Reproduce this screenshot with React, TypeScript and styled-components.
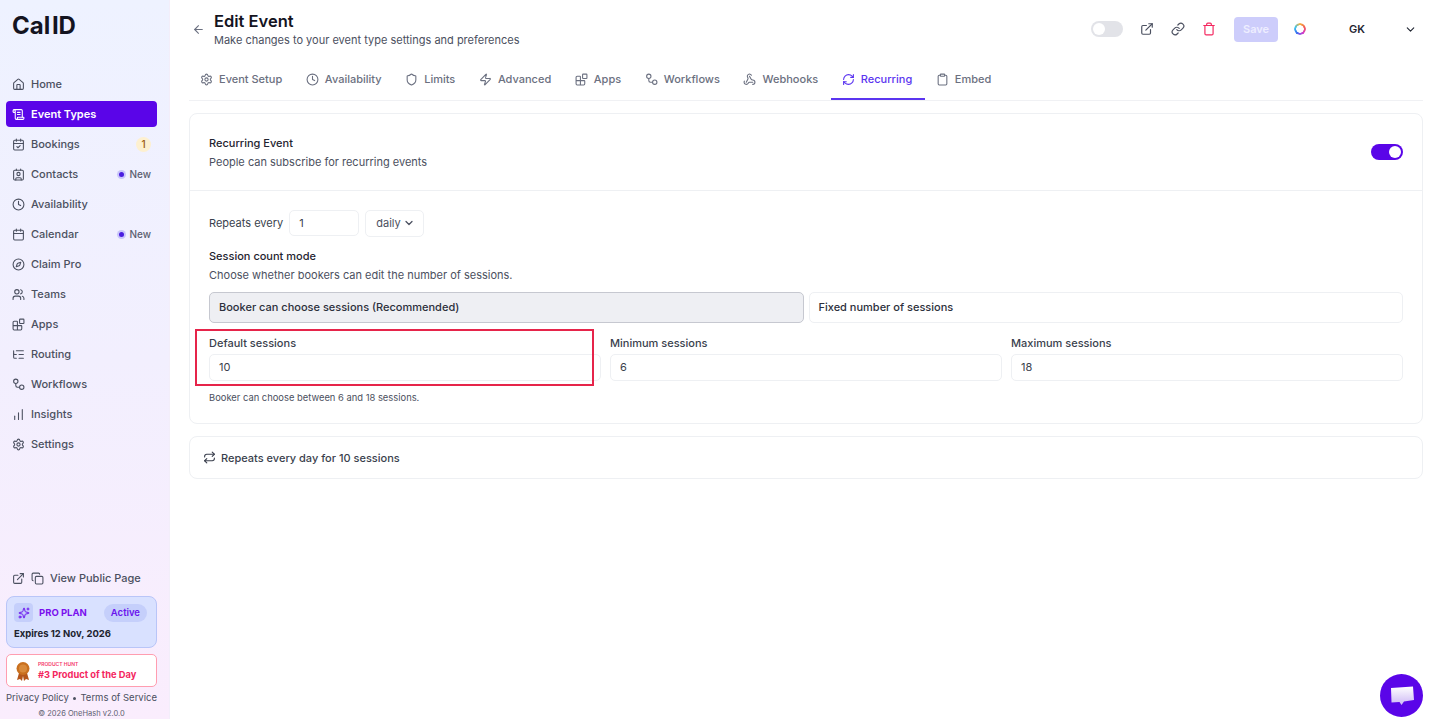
import React from "react";
import styled, { createGlobalStyle } from "styled-components";
import {
  ArrowLeft,
  Blocks,
  Calendar,
  CalendarCheck,
  ChartNoAxesColumnIncreasing,
  ChevronDown,
  Clipboard,
  Clock,
  Compass,
  Contact,
  Copy,
  ExternalLink,
  House,
  Link,
  ListTree,
  RefreshCw,
  Repeat,
  ScrollText,
  Settings,
  Shield,
  Sparkles,
  Trash,
  Users,
  Webhook,
  Zap,
} from "lucide-react";

const GlobalStyle = createGlobalStyle`
  * { box-sizing: border-box; }
  html, body { margin: 0; height: 100%; overflow: hidden; background: #fff; }
  body { font-family: Inter, "Liberation Sans", sans-serif; color: #1f2430; }
`;

const WorkflowIcon = ({ size = 13 }: { size?: number }) => (
  <svg width={size} height={size} viewBox="0 0 24 24" fill="none" stroke="currentColor" strokeWidth="2">
    <circle cx="7" cy="6" r="4" />
    <circle cx="18" cy="17" r="4" />
    <path d="M7 10v4a3 3 0 0 0 3 3h4" />
  </svg>
);

const navItems = [
  { label: "Home", icon: <House size={13} /> },
  { label: "Event Types", icon: <ScrollText size={13} />, active: true },
  { label: "Bookings", icon: <CalendarCheck size={13} />, count: "1" },
  { label: "Contacts", icon: <Contact size={13} />, isNew: true },
  { label: "Availability", icon: <Clock size={13} /> },
  { label: "Calendar", icon: <Calendar size={13} />, isNew: true },
  { label: "Claim Pro", icon: <Compass size={13} /> },
  { label: "Teams", icon: <Users size={13} /> },
  { label: "Apps", icon: <Blocks size={13} /> },
  { label: "Routing", icon: <ListTree size={13} /> },
  { label: "Workflows", icon: <WorkflowIcon /> },
  { label: "Insights", icon: <ChartNoAxesColumnIncreasing size={13} /> },
  { label: "Settings", icon: <Settings size={13} /> },
];

const tabs = [
  { label: "Event Setup", icon: <Settings size={13} /> },
  { label: "Availability", icon: <Clock size={13} /> },
  { label: "Limits", icon: <Shield size={13} /> },
  { label: "Advanced", icon: <Zap size={13} /> },
  { label: "Apps", icon: <Blocks size={13} /> },
  { label: "Workflows", icon: <WorkflowIcon /> },
  { label: "Webhooks", icon: <Webhook size={13} /> },
  { label: "Recurring", icon: <RefreshCw size={13} />, active: true },
  { label: "Embed", icon: <Clipboard size={13} /> },
];

const App: React.FC = () => {
  return (
    <Page>
      <GlobalStyle />
      <Sidebar>
        <Logo>Cal ID</Logo>
        <Nav>
          {navItems.map((item) => (
            <NavItem key={item.label} $active={item.active}>
              {item.icon}
              <span>{item.label}</span>
              {item.count && <CountBadge>{item.count}</CountBadge>}
              {item.isNew && (
                <NewBadge>
                  <NewDot />
                  New
                </NewBadge>
              )}
            </NavItem>
          ))}
        </Nav>
        <SidebarBottom>
          <PublicLink>
            <ExternalLink size={13} />
            <Copy size={13} />
            <span>View Public Page</span>
          </PublicLink>
          <PlanCard>
            <PlanTop>
              <PlanIcon>
                <Sparkles size={12} />
              </PlanIcon>
              <PlanName>PRO PLAN</PlanName>
              <PlanStatus>Active</PlanStatus>
            </PlanTop>
            <PlanExpiry>Expires 12 Nov, 2026</PlanExpiry>
          </PlanCard>
          <HuntCard>
            <svg width="16" height="20" viewBox="0 0 16 20">
              <path d="M4 12 2 19l3-1 2 2 1-5 1 5 2-2 3 1-2-7z" fill="#b4561a" />
              <circle cx="8" cy="7.5" r="6.5" fill="#c9701f" />
              <circle cx="8" cy="7.5" r="4" fill="#d98a3a" />
            </svg>
            <div>
              <HuntLabel>PRODUCT HUNT</HuntLabel>
              <HuntTitle>#3 Product of the Day</HuntTitle>
            </div>
          </HuntCard>
          <LegalLinks>
            <span>Privacy Policy</span>
            <LegalDot />
            <span>Terms of Service</span>
          </LegalLinks>
          <Copyright>© 2026 OneHash v2.0.0</Copyright>
        </SidebarBottom>
      </Sidebar>
      <Main>
        <Header>
          <BackButton>
            <ArrowLeft size={13} />
          </BackButton>
          <div>
            <PageTitle>Edit Event</PageTitle>
            <PageSubtitle>Make changes to your event type settings and preferences</PageSubtitle>
          </div>
          <Actions>
            <Toggle />
            <IconButton>
              <ExternalLink size={14} />
            </IconButton>
            <IconButton>
              <Link size={14} />
            </IconButton>
            <IconButton $danger>
              <Trash size={14} />
            </IconButton>
            <SaveButton>Save</SaveButton>
            <ColorRing />
            <UserMenu>
              <span>GK</span>
              <ChevronDown size={13} />
            </UserMenu>
          </Actions>
        </Header>
        <TabBar>
          {tabs.map((tab) => (
            <Tab key={tab.label} $active={tab.active}>
              {tab.icon}
              {tab.label}
            </Tab>
          ))}
        </TabBar>
        <Card>
          <CardHeader>
            <div>
              <StrongText>Recurring Event</StrongText>
              <MutedText>People can subscribe for recurring events</MutedText>
            </div>
            <Toggle $on />
          </CardHeader>
          <CardBody>
            <RepeatRow>
              <span>Repeats every</span>
              <RepeatInput>1</RepeatInput>
              <SelectBox>
                daily
                <ChevronDown size={12} strokeWidth={2.5} />
              </SelectBox>
            </RepeatRow>
            <ModeHeading>
              <StrongText>Session count mode</StrongText>
              <MutedText>Choose whether bookers can edit the number of sessions.</MutedText>
            </ModeHeading>
            <ModeGrid>
              <ModeOption $selected>Booker can choose sessions (Recommended)</ModeOption>
              <ModeOption>Fixed number of sessions</ModeOption>
            </ModeGrid>
            <FieldGrid>
              <Field>
                <Highlight />
                <FieldLabel>Default sessions</FieldLabel>
                <FieldInput>10</FieldInput>
              </Field>
              <Field>
                <FieldLabel>Minimum sessions</FieldLabel>
                <FieldInput>6</FieldInput>
              </Field>
              <Field>
                <FieldLabel>Maximum sessions</FieldLabel>
                <FieldInput>18</FieldInput>
              </Field>
            </FieldGrid>
            <HelperText>Booker can choose between 6 and 18 sessions.</HelperText>
          </CardBody>
        </Card>
        <SummaryCard>
          <Repeat size={13} />
          Repeats every day for 10 sessions
        </SummaryCard>
      </Main>
      <ChatButton>
        <svg width="26" height="24" viewBox="0 0 26 24">
          <defs>
            <linearGradient id="bubble" x1="0" y1="0" x2="0" y2="1">
              <stop offset="0" stopColor="#ffffff" />
              <stop offset="1" stopColor="#cdb8f5" />
            </linearGradient>
          </defs>
          <path d="M2 4 24 2.5 25 16 15 17.5 12.5 21 10.5 18 2.5 18.5Z" fill="url(#bubble)" />
        </svg>
      </ChatButton>
    </Page>
  );
};

const Page = styled.div`
  display: flex;
  height: 100vh;
  font-size: 11px;
  line-height: 18px;
`;

const Sidebar = styled.aside`
  width: 170px;
  flex-shrink: 0;
  display: flex;
  flex-direction: column;
  padding: 12px 12px 0 6px;
  background: linear-gradient(180deg, #eef2ff 0%, #f2effe 50%, #faedfd 100%);
  border-right: 1px solid #f3eefa;
`;

const Logo = styled.div`
  height: 28px;
  padding-left: 6px;
  font-size: 24px;
  line-height: 28px;
  font-weight: 700;
  word-spacing: -4px;
  color: #14141f;
`;

const Nav = styled.nav`
  display: flex;
  flex-direction: column;
  gap: 4px;
  margin-top: 31px;
`;

const NavItem = styled.div<{ $active?: boolean }>`
  display: flex;
  align-items: center;
  gap: 6px;
  height: 26px;
  padding: 0 6px;
  border-radius: 4px;
  font-weight: ${(p) => (p.$active ? 600 : 500)};
  color: ${(p) => (p.$active ? "#fff" : "#4b5060")};
  background: ${(p) => (p.$active ? "#5a05e8" : "transparent")};
  svg {
    flex-shrink: 0;
  }
`;

const CountBadge = styled.span`
  margin-left: auto;
  width: 15px;
  height: 15px;
  border-radius: 50%;
  background: #fdf0d0;
  color: #9a5b10;
  font-size: 10px;
  line-height: 15px;
  text-align: center;
`;

const NewBadge = styled.span`
  margin-left: auto;
  display: flex;
  align-items: center;
  gap: 5px;
  font-size: 10px;
  color: #5c6070;
`;

const NewDot = styled.i`
  width: 5px;
  height: 5px;
  border-radius: 50%;
  background: #4a1de0;
  box-shadow: 0 0 0 2px #c9c6fa;
`;

const SidebarBottom = styled.div`
  margin-top: auto;
  display: flex;
  flex-direction: column;
`;

const PublicLink = styled.div`
  display: flex;
  align-items: center;
  gap: 6px;
  padding-left: 6px;
  margin-bottom: 9px;
  font-weight: 500;
  color: #4b5060;
`;

const PlanCard = styled.div`
  height: 52px;
  padding: 6px 9px 0 7px;
  border: 1px solid #b9c5f8;
  border-radius: 8px;
  background: #d9e1ff;
`;

const PlanTop = styled.div`
  display: flex;
  align-items: center;
`;

const PlanIcon = styled.span`
  display: flex;
  align-items: center;
  justify-content: center;
  width: 19px;
  height: 19px;
  border-radius: 4px;
  background: #c5cffb;
  color: #6a14ee;
`;

const PlanName = styled.span`
  margin-left: 6px;
  font-size: 9.5px;
  font-weight: 700;
  color: #7a10ee;
`;

const PlanStatus = styled.span`
  margin-left: auto;
  padding: 0 7px;
  border-radius: 9px;
  background: #c5cffb;
  color: #6a14ee;
  font-size: 9.5px;
  font-weight: 600;
  line-height: 18px;
`;

const PlanExpiry = styled.div`
  margin-top: 5px;
  font-size: 9.5px;
  font-weight: 700;
  line-height: 14px;
  color: #20232e;
`;

const HuntCard = styled.div`
  display: flex;
  align-items: center;
  gap: 7px;
  height: 33px;
  margin-top: 6px;
  padding-left: 8px;
  border: 1px solid #ff9db0;
  border-radius: 5px;
  background: #fff;
`;

const HuntLabel = styled.div`
  font-size: 5px;
  font-weight: 600;
  line-height: 7px;
  color: #f4376b;
`;

const HuntTitle = styled.div`
  font-size: 9.3px;
  font-weight: 700;
  line-height: 13px;
  color: #f4275f;
`;

const LegalLinks = styled.div`
  display: flex;
  align-items: center;
  justify-content: space-between;
  margin-top: 3px;
  font-size: 9.5px;
  line-height: 16px;
  color: #4b5060;
`;

const LegalDot = styled.i`
  width: 3px;
  height: 3px;
  border-radius: 50%;
  background: #4b5060;
`;

const Copyright = styled.div`
  margin-top: 3px;
  font-size: 7.5px;
  line-height: 10px;
  text-align: center;
  color: #5c6070;
`;

const Main = styled.main`
  flex: 1;
  min-width: 0;
  padding: 0 6px 0 19px;
`;

const Header = styled.header`
  display: flex;
  align-items: center;
  height: 58px;
`;

const BackButton = styled.span`
  display: flex;
  width: 25px;
  padding-left: 3px;
  color: #6b7080;
`;

const PageTitle = styled.h1`
  margin: 0 0 1px;
  font-size: 16.5px;
  line-height: 20px;
  font-weight: 600;
  color: #14141f;
`;

const PageSubtitle = styled.p`
  margin: 0;
  font-size: 11px;
  line-height: 16px;
  color: #4b5060;
`;

const Actions = styled.div`
  margin-left: auto;
  display: flex;
  align-items: center;
  gap: 17px;
  padding-right: 6px;
`;

const Toggle = styled.span<{ $on?: boolean }>`
  display: flex;
  justify-content: ${(p) => (p.$on ? "flex-end" : "flex-start")};
  align-items: center;
  width: 32px;
  height: 16px;
  padding: 2px;
  border-radius: 8px;
  background: ${(p) => (p.$on ? "#5a05e8" : "#e2e3e8")};
  &::after {
    content: "";
    width: 12px;
    height: 12px;
    border-radius: 50%;
    background: #fff;
  }
`;

const IconButton = styled.span<{ $danger?: boolean }>`
  display: flex;
  color: ${(p) => (p.$danger ? "#f4275f" : "#4b5060")};
`;

const SaveButton = styled.span`
  width: 44px;
  height: 25px;
  margin: 0 -1px 0 1px;
  border-radius: 4px;
  background: #cdcdfb;
  color: #eeeeff;
  font-weight: 600;
  line-height: 25px;
  text-align: center;
`;

const ColorRing = styled.span`
  width: 12px;
  height: 12px;
  border-radius: 50%;
  background: conic-gradient(#f5b03c, #f45a5a, #d23ccf, #3c6cf0, #3cc8f0, #f5b03c);
  -webkit-mask: radial-gradient(circle, transparent 3.5px, #000 4px);
  mask: radial-gradient(circle, transparent 3.5px, #000 4px);
`;

const UserMenu = styled.div`
  display: flex;
  align-items: center;
  gap: 39px;
  margin-left: 26px;
  font-weight: 600;
  color: #1f2430;
`;

const TabBar = styled.nav`
  display: flex;
  height: 43px;
  border-bottom: 1px solid #f0f1f4;
`;

const Tab = styled.div<{ $active?: boolean }>`
  display: flex;
  align-items: center;
  gap: 6px;
  height: 42px;
  padding: 2px 12.6px 0 11px;
  font-weight: 500;
  color: ${(p) => (p.$active ? "#5b35f0" : "#6b7080")};
  border-bottom: 2px solid ${(p) => (p.$active ? "#5b35f0" : "transparent")};
`;

const Card = styled.section`
  margin-top: 12px;
  border: 1px solid #eef0f3;
  border-radius: 8px;
`;

const CardHeader = styled.div`
  display: flex;
  align-items: center;
  justify-content: space-between;
  height: 77px;
  padding: 0 19px;
  border-bottom: 1px solid #eef0f3;
`;

const StrongText = styled.div`
  font-weight: 500;
  color: #1f2430;
`;

const MutedText = styled.div`
  margin-top: 1px;
  color: #4b5060;
`;

const CardBody = styled.div`
  padding: 19px 19px 17px;
`;

const RepeatRow = styled.div`
  display: flex;
  align-items: center;
  gap: 6px;
  height: 26px;
  color: #3a3f4d;
`;

const RepeatInput = styled.div`
  width: 70px;
  height: 26px;
  padding-left: 9px;
  border: 1px solid #eef0f3;
  border-radius: 5px;
  line-height: 24px;
`;

const SelectBox = styled.div`
  display: flex;
  align-items: center;
  gap: 2px;
  width: 59px;
  height: 27px;
  padding-left: 10px;
  border: 1px solid #eef0f3;
  border-radius: 5px;
  color: #4b5060;
`;

const ModeHeading = styled.div`
  margin-top: 11px;
`;

const ModeGrid = styled.div`
  display: grid;
  grid-template-columns: 1fr 1fr;
  gap: 5px;
  margin-top: 8px;
`;

const ModeOption = styled.div<{ $selected?: boolean }>`
  height: 31px;
  padding: 0 9px;
  border: 1px solid ${(p) => (p.$selected ? "#c6c8d0" : "#eef0f3")};
  border-radius: 5px;
  background: ${(p) => (p.$selected ? "#eeeff3" : "#fff")};
  font-weight: 500;
  line-height: 29px;
  color: #2c303c;
`;

const FieldGrid = styled.div`
  display: grid;
  grid-template-columns: repeat(3, 1fr);
  gap: 9px;
  margin-top: 11px;
`;

const Field = styled.div`
  position: relative;
`;

const Highlight = styled.div`
  position: absolute;
  top: -5px;
  left: -14px;
  width: 399px;
  height: 57px;
  border-width: 2px;
  border-style: solid;
  border-color: #e6244a;
  pointer-events: none;
`;

const FieldLabel = styled.div`
  font-weight: 500;
  color: #3a3f4d;
`;

const FieldInput = styled.div`
  height: 27px;
  margin-top: 2px;
  padding-left: 9px;
  border: 1px solid #eef0f3;
  border-radius: 5px;
  line-height: 25px;
  color: #3a3f4d;
`;

const HelperText = styled.div`
  margin-top: 9px;
  font-size: 9.4px;
  line-height: 16px;
  color: #4b5060;
`;

const SummaryCard = styled.div`
  display: flex;
  align-items: center;
  gap: 5px;
  height: 43px;
  margin-top: 12px;
  padding: 0 13px;
  border: 1px solid #eef0f3;
  border-radius: 8px;
  font-weight: 500;
  color: #3a3f4d;
`;

const ChatButton = styled.div`
  position: fixed;
  right: 6px;
  bottom: 2px;
  display: flex;
  align-items: center;
  justify-content: center;
  width: 43px;
  height: 43px;
  border-radius: 50%;
  background: #5a05e8;
`;

export default App;
